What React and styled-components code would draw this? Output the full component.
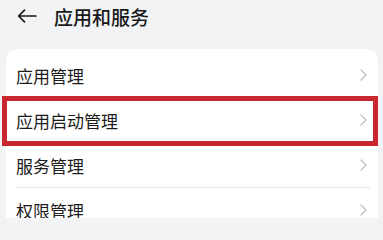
import React from "react";
import styled, { createGlobalStyle, css } from "styled-components";

const Global = createGlobalStyle`
  html, body { margin: 0; padding: 0; background: #f1f3f5; }
  body { font-family: "Noto Sans CJK SC", "Noto Sans", sans-serif; color: #1c1c1c; }
`;

const Page = styled.div`
  width: 383px;
  height: 218px;
  overflow: hidden;
  background: #f1f3f5;
`;

const Header = styled.div`
  height: 32px;
  display: flex;
  align-items: center;
  padding-left: 17px;
  gap: 17px;
`;

const BackButton = styled.div`
  width: 20px;
  height: 14px;
  display: flex;
  align-items: center;
`;

const Title = styled.div`
  font-size: 19px;
  font-weight: 500;
  line-height: 1;
  color: #1a1a1a;
`;

const Card = styled.div`
  margin: 17px 5px 0 6px;
  background: #ffffff;
  border-radius: 12px;
  padding-top: 4px;
`;

const Row = styled.div`
  position: relative;
  height: 44px;
  display: flex;
  align-items: center;
  justify-content: space-between;
  padding: 0 11px 0 10px;
  ${(p) =>
    p.$highlight &&
    css`
      &::after {
        content: "";
        position: absolute;
        top: -2px;
        left: -4px;
        right: 0;
        bottom: -4px;
        border: 5px solid #c8272f;
        pointer-events: none;
      }
    `}
`;

const Label = styled.span`
  font-size: 17px;
  line-height: 1;
  color: #1c1c1c;
`;

const Divider = styled.div`
  height: 1px;
  margin: 0 8px 0 10px;
  background: #e6e6e6;
`;

const Chevron = () => (
  <svg width="7" height="12" viewBox="0 0 7 12">
    <path d="M1 1 L6 6 L1 11" fill="none" stroke="#bdbdbd" strokeWidth="1.2" strokeLinecap="round" strokeLinejoin="round" />
  </svg>
);

const items = [
  { label: "应用管理" },
  { label: "应用启动管理", highlight: true },
  { label: "服务管理" },
  { label: "权限管理" },
];

export default function App() {
  return (
    <>
      <Global />
      <Page>
        <Header>
          <BackButton>
            <svg width="20" height="14" viewBox="0 0 20 14">
              <path d="M19 7 H2 M7.5 1.2 L1.6 7 L7.5 12.8" fill="none" stroke="#1a1a1a" strokeWidth="1.7" strokeLinecap="round" strokeLinejoin="round" />
            </svg>
          </BackButton>
          <Title>应用和服务</Title>
        </Header>
        <Card>
          {items.map((it, i) => (
            <React.Fragment key={it.label}>
              {i > 0 && <Divider />}
              <Row $highlight={it.highlight}>
                <Label>{it.label}</Label>
                <Chevron />
              </Row>
            </React.Fragment>
          ))}
        </Card>
      </Page>
    </>
  );
}
